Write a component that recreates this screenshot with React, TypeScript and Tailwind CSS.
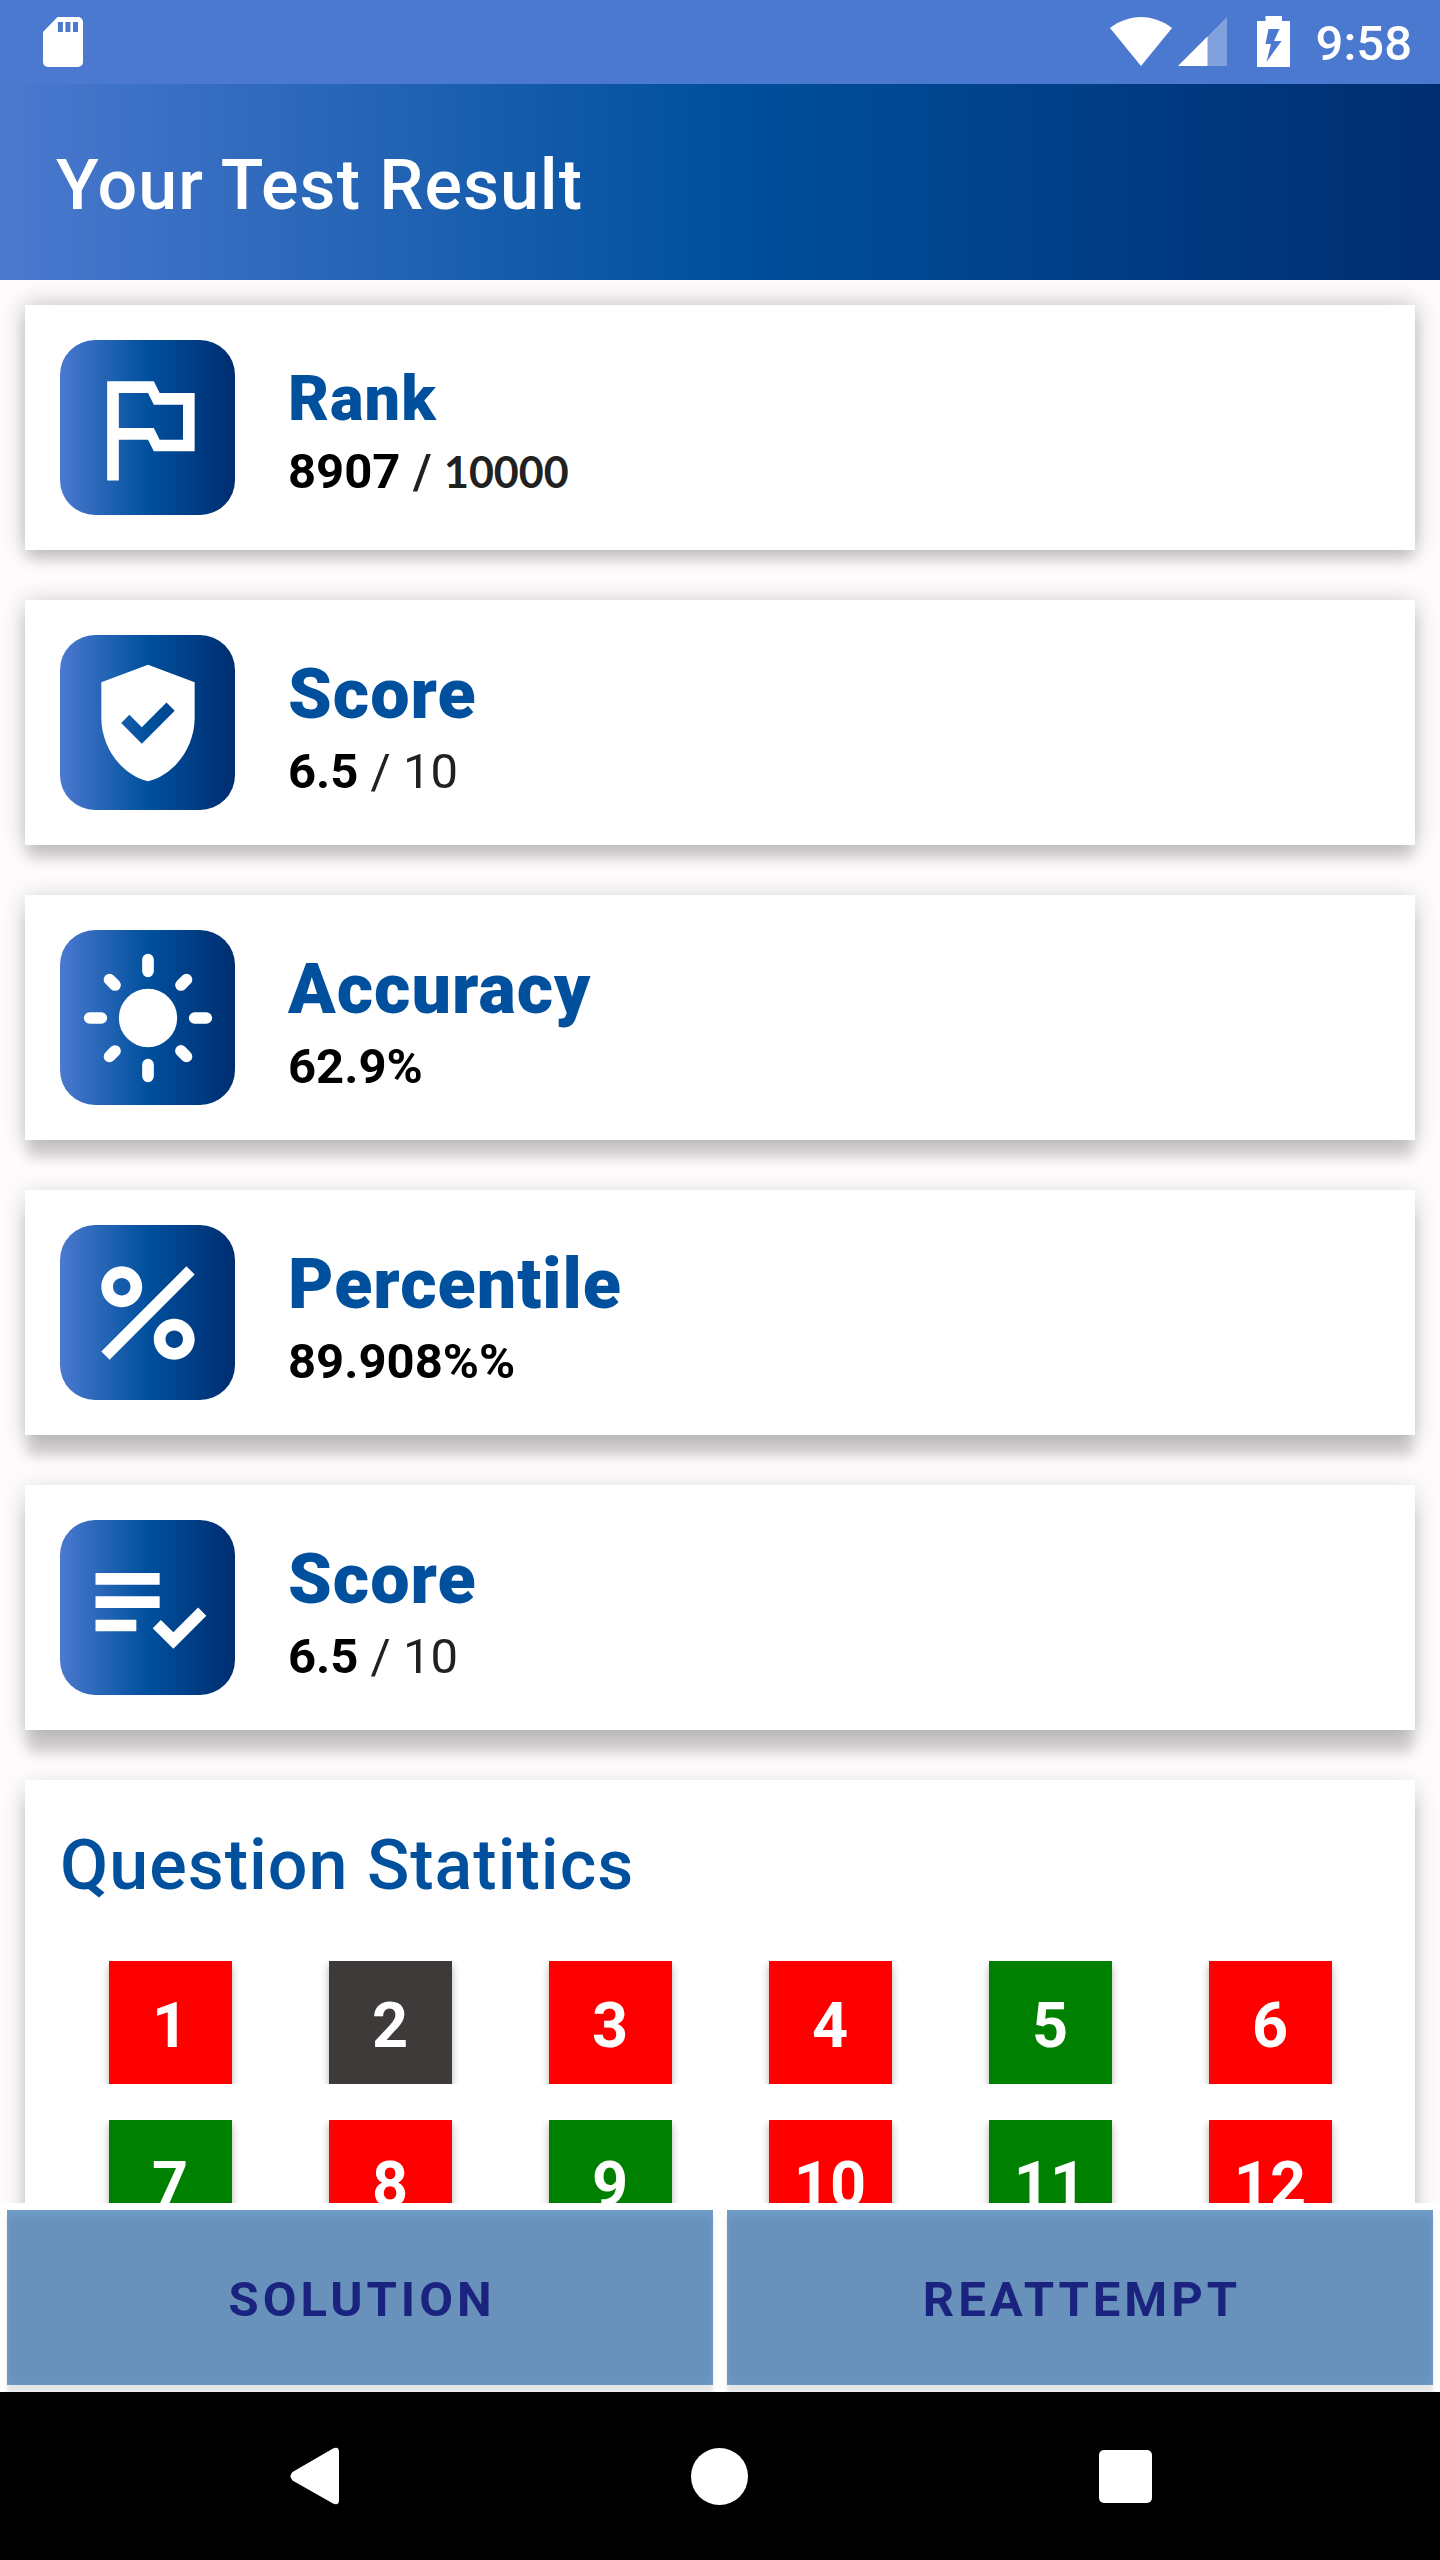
import type { ReactNode } from "react";

type Result = {
  title: string;
  titleClass: string;
  value: string;
  total?: ReactNode;
  shadow: string;
  icon: ReactNode;
};

const results: Result[] = [
  {
    title: "Rank",
    titleClass: "text-[63px] leading-[72px]",
    value: "8907",
    total: (
      <>
        <span className="font-medium"> / </span>
        <span className="font-['Lato',sans-serif] text-[43px] font-bold">10000</span>
      </>
    ),
    shadow: "shadow-[0_12px_12px_-2px_rgba(0,0,0,0.12),0_0_22px_rgba(0,0,0,0.26)]",
    icon: (
      <path d="M14 6l-1-2H5v17h2v-7h5l1 2h7V6h-6zm4 8h-4l-1-2H7V6h5l1 2h5v6z" />
    ),
  },
  {
    title: "Score",
    titleClass: "text-[70px] leading-[82px]",
    value: "6.5",
    total: " / 10",
    shadow: "shadow-[0_16px_12px_-2px_rgba(0,0,0,0.13),0_2px_22px_rgba(0,0,0,0.22)]",
    icon: (
      <path d="M12 2L4 5v6.09c0 5.05 3.41 9.76 8 10.91 4.59-1.15 8-5.86 8-10.91V5l-8-3zm-1.06 13.54L7.4 12l1.41-1.41 2.12 2.12 4.24-4.24 1.41 1.41-5.64 5.66z" />
    ),
  },
  {
    title: "Accuracy",
    titleClass: "text-[70px] leading-[82px]",
    value: "62.9%",
    shadow: "shadow-[0_20px_12px_-2px_rgba(0,0,0,0.14),0_3px_22px_rgba(0,0,0,0.2)]",
    icon: (
      <>
        <circle cx="12" cy="12" r="5" />
        <path
          d="M12 2v2M12 20v2M2 12h2M20 12h2M5.4 5.4l.95.95M17.65 17.65l.95.95M5.4 18.6l.95-.95M17.65 6.35l.95-.95"
          stroke="currentColor"
          strokeWidth="2"
          strokeLinecap="round"
        />
      </>
    ),
  },
  {
    title: "Percentile",
    titleClass: "text-[70px] leading-[82px]",
    value: "89.908%%",
    shadow: "shadow-[0_23px_12px_-2px_rgba(0,0,0,0.16),0_5px_22px_rgba(0,0,0,0.18)]",
    icon: (
      <path d="M7.5 4C5.57 4 4 5.57 4 7.5S5.57 11 7.5 11 11 9.43 11 7.5 9.43 4 7.5 4zm0 5C6.67 9 6 8.33 6 7.5S6.67 6 7.5 6 9 6.67 9 7.5 8.33 9 7.5 9zM16.5 13c-1.93 0-3.5 1.57-3.5 3.5s1.57 3.5 3.5 3.5 3.5-1.57 3.5-3.5-1.57-3.5-3.5-3.5zm0 5c-.83 0-1.5-.67-1.5-1.5s.67-1.5 1.5-1.5 1.5.67 1.5 1.5-.67 1.5-1.5 1.5zM5.41 20L4 18.59 18.59 4 20 5.41 5.41 20z" />
    ),
  },
  {
    title: "Score",
    titleClass: "text-[70px] leading-[82px]",
    value: "6.5",
    total: " / 10",
    shadow: "shadow-[0_25px_12px_-2px_rgba(0,0,0,0.16),0_6px_22px_rgba(0,0,0,0.18)]",
    icon: (
      <path d="M3 10h11v2H3zM3 6h11v2H3zM3 14h7v2H3zM20.59 11.93l-4.25 4.24-2.12-2.12-1.41 1.41L16.34 19 22 13.34z" />
    ),
  },
];

type Status = "wrong" | "correct" | "skipped";

const statusColor: Record<Status, string> = {
  wrong: "bg-[#ff0000]",
  correct: "bg-[#008000]",
  skipped: "bg-[#3e3a39]",
};

const questions: Status[] = [
  "wrong",
  "skipped",
  "wrong",
  "wrong",
  "correct",
  "wrong",
  "correct",
  "wrong",
  "correct",
  "wrong",
  "correct",
  "wrong",
];

function StatusBar() {
  return (
    <div className="flex h-[84px] shrink-0 items-center justify-between bg-[#4b79cf] pr-[28px] pl-[43px] text-white">
      <svg width="40" height="50" viewBox="0 0 40 50" fill="currentColor" aria-hidden="true">
        <path
          fillRule="evenodd"
          d="M14.5 0H35a5 5 0 0 1 5 5v40a5 5 0 0 1-5 5H5a5 5 0 0 1-5-5V15zM14.9 5v10h5V5zM22.4 5v10h5V5zM30 5v10h5V5z"
        />
      </svg>
      <div className="flex items-center">
        <svg width="62" height="50" viewBox="0 0 62 50" fill="currentColor" aria-hidden="true">
          <path d="M0 11C9 4 20 0 31 0s22 4 31 11L31 49z" />
        </svg>
        <svg className="ml-[6px]" width="49" height="50" viewBox="0 0 49 50" fill="currentColor" aria-hidden="true">
          <path d="M49 0v49H0z" opacity="0.3" />
          <path d="M29.5 19.5v29.5H0z" />
        </svg>
        <svg className="ml-[30px]" width="33" height="52" viewBox="0 0 33 52" fill="currentColor" aria-hidden="true">
          <path
            fillRule="evenodd"
            d="M8.5 0h16.5v5H33v46H0V5h8.5zM11.5 13L8.5 28h5.5L9.5 46 24.5 25h-7.5l5.5-12z"
          />
        </svg>
        <span className="ml-[26px] pt-1 text-[49px] leading-[58px] font-medium">9:58</span>
      </div>
    </div>
  );
}

function ResultCard({ result }: { result: Result }) {
  return (
    <section className={`flex gap-[53px] bg-white p-[35px] ${result.shadow}`}>
      <div className="flex size-[175px] shrink-0 items-center justify-center rounded-[35px] bg-linear-to-r/srgb from-[#4b79cf] via-[#00509d] to-[#002d70] text-white">
        <svg width="140" height="140" viewBox="0 0 24 24" fill="currentColor" aria-hidden="true">
          {result.icon}
        </svg>
      </div>
      <div className="flex flex-col justify-center gap-2 pt-[7px]">
        <h2 className={`font-black tracking-[1px] text-[#00509d] ${result.titleClass}`}>{result.title}</h2>
        <p className="text-[49px] leading-[57px] whitespace-pre text-[#212121]">
          <span className="font-bold text-black">{result.value}</span>
          {result.total}
        </p>
      </div>
    </section>
  );
}

function ActionButton({ children }: { children: ReactNode }) {
  return (
    <button
      type="button"
      className="h-[175px] flex-1 bg-[#6892bc] pt-1 pl-1 text-[49px] leading-[57px] font-bold tracking-[4px] text-[#1a237e] shadow-[inset_0_4px_10px_#72a0cb,0_8px_4px_rgba(0,0,0,0.1)]"
    >
      {children}
    </button>
  );
}

export default function App() {
  return (
    <div className="flex h-screen flex-col bg-[#fefbfc] font-['Roboto',sans-serif]">
      <StatusBar />
      <header className="flex h-[196px] shrink-0 items-center bg-linear-to-r/srgb from-[#4b79cf] via-[#00509d] to-[#002d70] px-[56px] pt-[6px]">
        <h1 className="text-[70px] leading-[82px] font-medium tracking-[1px] text-white">Your Test Result</h1>
      </header>
      <main className="flex min-h-0 flex-1 flex-col gap-[50px] overflow-y-auto px-[25px] py-[25px] [scrollbar-width:none]">
        {results.map((result, index) => (
          <ResultCard key={index} result={result} />
        ))}
        <section className="bg-white px-[35px] pt-[44px] pb-[35px] shadow-[0_22px_12px_-2px_rgba(0,0,0,0.14),0_8px_22px_rgba(0,0,0,0.2)]">
          <h2 className="text-[70px] leading-[82px] font-medium tracking-[1px] text-[#00509d]">Question Statitics</h2>
          <div className="mt-[55px] grid grid-cols-6 justify-items-center gap-y-[36px]">
            {questions.map((status, index) => (
              <button
                key={index}
                type="button"
                className={`size-[123px] pt-[6px] text-[63px] leading-[74px] font-bold text-white shadow-[0_4px_8px_rgba(0,0,0,0.3)] [clip-path:inset(0_-8px)] ${statusColor[status]}`}
              >
                {index + 1}
              </button>
            ))}
          </div>
        </section>
      </main>
      <div className="flex shrink-0 gap-[14px] overflow-hidden bg-white p-[7px]">
        <ActionButton>SOLUTION</ActionButton>
        <ActionButton>REATTEMPT</ActionButton>
      </div>
      <nav className="grid h-[168px] shrink-0 grid-cols-3 items-center justify-items-center bg-black px-28 text-white">
        <button type="button" aria-label="Back">
          <svg width="50" height="58" viewBox="0 0 50 58" fill="currentColor">
            <path d="M2.5 25L43 1.5Q49 -1 49 5v48Q49 59 43 56.5L2.5 33.5Q-1.5 29.2 2.5 25z" />
          </svg>
        </button>
        <button type="button" aria-label="Home" className="size-[57px] rounded-full bg-white" />
        <button type="button" aria-label="Recent apps" className="size-[53px] rounded-[5px] bg-white" />
      </nav>
    </div>
  );
}
